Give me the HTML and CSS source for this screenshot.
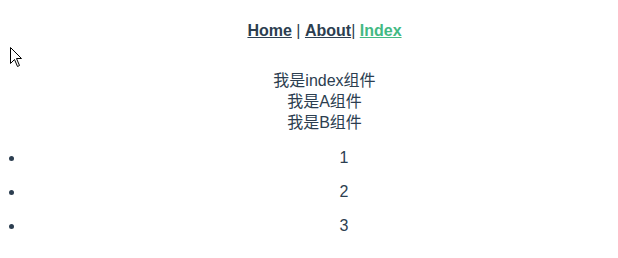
FILE: index.html
```html
<!DOCTYPE html>
<html>
<head>
<meta charset="utf-8">
<link rel="stylesheet" href="styles.css">
</head>
<body>
<div id="app" class="app">
  <div class="nav">
    <a class="nav-link" href="#">Home</a> | <a class="nav-link" href="#">About</a>| <a class="nav-link active" href="#">Index</a>
  </div>
  <div class="content">
    <div class="line">我是index组件</div>
    <div class="line">我是A组件</div>
    <div class="line">我是B组件</div>
    <ul class="list">
      <li class="item">1</li>
      <li class="item">2</li>
      <li class="item">3</li>
    </ul>
  </div>
</div>
<svg class="cursor" width="13" height="20" viewBox="0 0 13 20"><path d="M0.5 0.5 L0.5 16.5 L4.5 12.5 L7.5 19.5 L9.5 18.5 L6.5 11.5 L11.5 11.5 Z" fill="#fff" stroke="#000" stroke-width="1"/></svg>
</body>
</html>
```
FILE: styles.css
```css
html, body {
  background: #fff;
}
body {
  margin: 8px;
  font-family: "Liberation Sans", Arial, "Noto Sans CJK SC", sans-serif;
  font-size: 16px;
  line-height: 21px;
  color: #2c3e50;
  -webkit-font-smoothing: antialiased;
}
.app {
  text-align: center;
  padding-left: 31px;
}
.nav {
  padding: 12px 0 29px;
}
.nav-link {
  font-weight: bold;
  color: #2c3e50;
  text-decoration: underline;
}
.nav-link.active {
  color: #42b983;
}
.content {
  margin: 0;
}
.line {
  height: 21px;
}
.list {
  margin: 14px 0 0 -31px;
  padding-left: 17px;
}
.item {
  padding-left: 53px;
  line-height: 21px;
  margin-bottom: 13px;
}
.cursor {
  position: absolute;
  left: 10px;
  top: 47px;
}
```
